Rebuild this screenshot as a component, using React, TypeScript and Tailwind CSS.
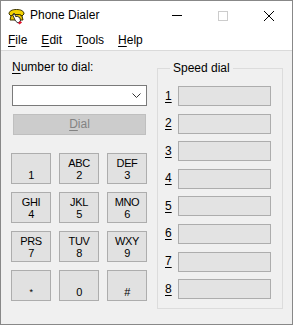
import React from 'react';

const keys = [
  { letters: '', digit: '1' },
  { letters: 'ABC', digit: '2' },
  { letters: 'DEF', digit: '3' },
  { letters: 'GHI', digit: '4' },
  { letters: 'JKL', digit: '5' },
  { letters: 'MNO', digit: '6' },
  { letters: 'PRS', digit: '7' },
  { letters: 'TUV', digit: '8' },
  { letters: 'WXY', digit: '9' },
  { letters: '', digit: '*' },
  { letters: '', digit: '0' },
  { letters: '', digit: '#' },
];

const speedSlots = ['1', '2', '3', '4', '5', '6', '7', '8'];

// Small yellow phone with a pointing hand, like the old dialer icon
const DialerIcon: React.FC = () => (
  <svg width="17" height="17" viewBox="0 0 17 17">
    <path d="M1 6 C1 3 4 1.5 8.5 1.5 C13 1.5 16 3 16 6 L14 8 L11.5 6.5 L5.5 6.5 L3 8 Z" fill="#f2d200" stroke="#3b3300" strokeWidth="1" />
    <path d="M3 8 L5.5 6.5 L11.5 6.5 L14 8 L15 12 L2 12 Z" fill="#e8c400" stroke="#3b3300" strokeWidth="1" />
    <path d="M6 5 L8 9 L9 8 L12 10 L12.5 13 L10 15 L7.5 13 L5 7.5 Z" fill="#ffffff" stroke="#222" strokeWidth="0.9" />
    <path d="M10 15 L12.5 13 L14 14.5 L11.5 16.5 Z" fill="#e0102a" />
  </svg>
);

const App: React.FC = () => {
  return (
    <div
      className="w-[293px] h-[325px] border border-[#888888] bg-[#f0f0f0] flex flex-col overflow-hidden text-black"
      style={{ fontFamily: '"Liberation Sans", Arial, sans-serif' }}
    >
      {/* Title bar */}
      <div className="h-[29px] bg-white flex items-center shrink-0">
        <div className="pl-[7px] pr-[5px] pt-[1px] flex items-center">
          <DialerIcon />
        </div>
        <span className="text-[12px] leading-[15px]">Phone Dialer</span>
        <div className="ml-auto flex h-full">
          <div className="w-[46px] h-full flex items-center justify-center">
            <div className="w-[10px] h-[1px] bg-black" />
          </div>
          <div className="w-[46px] h-full flex items-center justify-center">
            <div className="w-[10px] h-[10px] border border-[#cccccc]" />
          </div>
          <div className="w-[46px] h-full flex items-center justify-center">
            <svg width="10" height="10" viewBox="0 0 10 10">
              <path d="M0 0 L10 10 M10 0 L0 10" stroke="#000" strokeWidth="1" />
            </svg>
          </div>
        </div>
      </div>

      {/* Menu bar */}
      <div className="h-[21px] bg-white flex items-center text-[12px] leading-[15px] border-b border-[#dadada] shrink-0">
        <span className="ml-[7px]"><u className="underline-offset-[2px]">F</u>ile</span>
        <span className="ml-[14px]"><u className="underline-offset-[2px]">E</u>dit</span>
        <span className="ml-[14px]"><u className="underline-offset-[2px]">T</u>ools</span>
        <span className="ml-[14px]"><u className="underline-offset-[2px]">H</u>elp</span>
      </div>

      {/* Body */}
      <div className="flex flex-1">
        {/* Left column */}
        <div className="pl-[11px] pt-[9px] w-[146px] flex flex-col">
          <label className="text-[12px] leading-[15px]">
            <u className="underline-offset-[2px]">N</u>umber to dial:
          </label>
          <div className="mt-[10px] w-[135px] h-[21px] bg-white border border-[#7a7a7a] flex items-center justify-end pr-[5px]">
            <svg width="9" height="5" viewBox="0 0 9 5">
              <path d="M0.5 0.5 L4.5 4.5 L8.5 0.5" fill="none" stroke="#333" strokeWidth="1" />
            </svg>
          </div>
          <button className="mt-[8px] ml-[1px] w-[133px] h-[21px] bg-[#cccccc] border border-[#bfbfbf] text-[12px] leading-[15px] text-[#838383]">
            <u className="underline-offset-[2px]">D</u>ial
          </button>
          <div className="mt-[18px] -ml-[1px] grid grid-cols-[40px_40px_40px] gap-x-[8px] gap-y-[8px]">
            {keys.map((k) => (
              <button
                key={k.digit}
                className="h-[31px] bg-[#e1e1e1] border border-[#adadad] flex flex-col items-center justify-center text-[11px] leading-[12px] tracking-[-0.4px]"
              >
                <span className="h-[12px]">{k.letters}</span>
                <span className={k.digit === '*' ? 'h-[12px] text-[9px]' : 'h-[12px]'}>{k.digit}</span>
              </button>
            ))}
          </div>
        </div>

        {/* Speed dial group */}
        <fieldset className="ml-[10px] mt-[10px] w-[126px] h-[248px] border border-[#dcdcdc] pl-[7px] pt-[10px]">
          <legend className="ml-[5px] px-[3px] text-[12px] leading-[15px]">Speed dial</legend>
          <div className="flex flex-col gap-[7.6px]">
            {speedSlots.map((n) => (
              <div key={n} className="flex items-center">
                <span className="w-[13px] text-[12px] leading-[15px] underline underline-offset-[2px]">{n}</span>
                <div className="w-[93px] h-[20px] bg-[#e3e3e3] border border-[#adadad]" />
              </div>
            ))}
          </div>
        </fieldset>
      </div>
    </div>
  );
};

export default App;
